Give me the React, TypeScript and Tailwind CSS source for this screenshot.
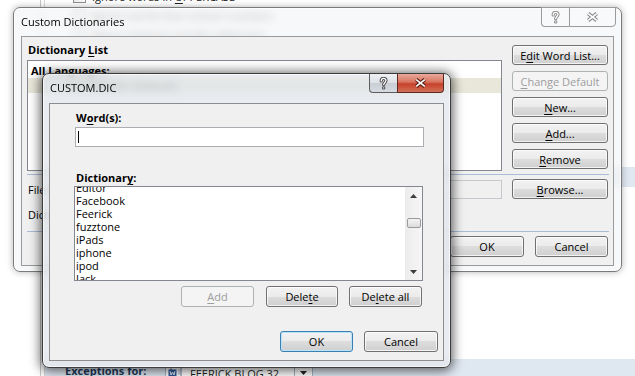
import React from "react";

type Kids = { children?: React.ReactNode };

function U({ children }: Kids) {
  return <span className="underline decoration-1 underline-offset-[2px]">{children}</span>;
}

type BtnProps = Kids & { className?: string; disabled?: boolean; primary?: boolean };

const btnFace =
  "bg-[linear-gradient(to_bottom,#f2f2f2_0%,#ebebeb_50%,#dddddd_50%,#cfcfcf_100%)]";

function Btn({ children, className = "", disabled, primary }: BtnProps) {
  let look = `border-[#707070] ${btnFace} shadow-[inset_0_0_0_1px_rgba(255,255,255,0.75)] text-black`;
  if (disabled) look = "border-[#adb2b5] bg-[#f4f4f4] text-[#9d9d9d]";
  if (primary) look = `border-[#3c7fb1] ${btnFace} shadow-[inset_0_0_0_1px_#b9e3f9] text-black`;
  return (
    <div
      className={`flex shrink-0 items-center justify-center rounded-[3px] border leading-[15px] ${look} ${className}`}
    >
      {children}
    </div>
  );
}

function HelpGlyph({ edge }: { edge: string }) {
  const d = "M2.2 4 C2.2 2.1 3.3 1.4 4.6 1.4 C6 1.4 7 2.3 7 3.6 C7 5.3 4.7 5.6 4.7 7.7";
  return (
    <svg width="9" height="13" viewBox="0 0 9 13">
      <path d={d} fill="none" stroke={edge} strokeWidth="3.2" strokeLinecap="round" />
      <circle cx="4.7" cy="10.9" r="1.7" fill={edge} />
      <path d={d} fill="none" stroke="#fff" strokeWidth="1.3" strokeLinecap="round" />
      <circle cx="4.7" cy="10.9" r="0.7" fill="#fff" />
    </svg>
  );
}

function CloseGlyph({ edge }: { edge: string }) {
  const d = "M2.2 1.6 L10.8 8.4 M10.8 1.6 L2.2 8.4";
  return (
    <svg width="13" height="10" viewBox="0 0 13 10">
      <path d={d} stroke={edge} strokeWidth="3.8" />
      <path d={d} stroke="#fff" strokeWidth="1.7" />
    </svg>
  );
}

function Checkbox() {
  return (
    <span className="h-[13px] w-[13px] shrink-0 border border-[#8e8f8f] bg-[linear-gradient(135deg,#dcdcdc,#ffffff)]" />
  );
}

const options = [
  <>
    Ignore words in <U>U</U>PPERCASE
  </>,
  <>Ignore words that contain numbers</>,
  <>Ignore Internet and file addresses</>,
  <>Flag repeated words</>,
  <>Enforce accented uppercase in French</>,
  <>Suggest from main dictionary only</>,
];

function BackgroundPage() {
  return (
    <div className="flex h-[376px]">
      <div className="w-[41px] shrink-0 border-r border-[#c8c8c8]" />
      <div className="w-[3px] shrink-0" />
      <div className="flex h-[376px] min-w-0 flex-1 flex-col border-l border-[#dadada]">
        <div className="-mt-[10px] flex h-[177px] shrink-0 flex-col gap-[6px] overflow-hidden pl-[28px]">
          {options.map((o, i) => (
            <div key={i} className="flex h-[13px] shrink-0 items-center gap-[6px] leading-[13px] text-[#222]">
              <Checkbox />
              <span>{o}</span>
            </div>
          ))}
        </div>
        <div className="flex h-[20px] shrink-0 items-center bg-[#dfe7f1] pl-[20px] font-bold text-[#1e395b]">
          When correcting spelling and grammar in Word
        </div>
        <div className="h-[172px] shrink-0" />
        <div className="flex h-[17px] shrink-0 items-start bg-[#dfe7f1] pl-[20px] pt-[4px]">
          <span className="w-[100px] font-bold leading-[15px] text-[#1e395b]">Exceptions for:</span>
          <div className="flex h-[20px] w-[148px] items-center border border-[#a7b5c6] bg-white">
            <svg width="14" height="13" viewBox="0 0 14 13" className="ml-[2px]">
              <rect x="3" y="0.5" width="10" height="12" fill="#fff" stroke="#6b7c93" />
              <rect x="0.5" y="2.5" width="8" height="7" fill="#2b5797" />
              <path d="M2 4 L3 8 L4.5 5 L6 8 L7 4" fill="none" stroke="#fff" strokeWidth="0.9" />
              <path d="M10 3 H12 M10 5 H12 M10 7 H12 M4 11 H12" stroke="#8aa0bd" strokeWidth="0.8" />
            </svg>
            <span className="ml-[8px] w-[104px] leading-[15px] text-[#222]">FEERICK BLOG 32</span>
            <div className="flex h-full flex-1 items-center justify-center border-l border-[#a7b5c6]">
              <svg width="7" height="4" viewBox="0 0 7 4">
                <path d="M0 0 H7 L3.5 4 Z" fill="#222" />
              </svg>
            </div>
          </div>
        </div>
      </div>
    </div>
  );
}

function OuterDialog() {
  return (
    <div className="absolute left-[13px] top-[7px] flex h-[265px] w-[609px] flex-col rounded-[7px] border border-[#7a7a7a] bg-[#f3f5f7]/70 px-[7px] pb-[5px] shadow-[inset_0_0_0_1px_rgba(255,255,255,0.7),0_0_7px_rgba(0,0,0,0.3)] backdrop-blur-[4px]">
      <div className="flex h-[28px] items-start">
        <span className="pt-[6px] leading-[15px] text-black">Custom Dictionaries</span>
        <div className="-mr-[2px] -mt-[1px] ml-auto flex h-[20px]">
          <div className="flex w-[28px] items-center justify-center rounded-bl-[4px] border border-r-0 border-[#9b9b9b] bg-white/20">
            <HelpGlyph edge="#8a8a8a" />
          </div>
          <div className="flex w-[47px] items-center justify-center rounded-br-[4px] border border-[#9b9b9b] bg-white/20">
            <CloseGlyph edge="#8a8a8a" />
          </div>
        </div>
      </div>

      <div className="flex h-[230px] flex-col border border-[#9a9a9a] bg-[#f0f0f0] pl-[5px]">
        <div className="flex gap-[10px]">
          <div className="flex w-[475px] flex-col">
            <div className="mt-[5px] pl-[1px] font-bold leading-[15px]">
              Dictionary <U>L</U>ist
            </div>
            <div className="mt-[3px] h-[111px] border border-[#828790] bg-white pt-[2px]">
              <div className="pl-[3px] font-bold leading-[15px]">All Languages:</div>
              <div className="flex h-[15px] items-center gap-[4px] bg-[#e9e7d9] pl-[18px]">
                <Checkbox />
                <span className="leading-[15px]">CUSTOM.DIC (Default)</span>
              </div>
            </div>
          </div>
          <div className="mt-[8px] flex w-[96px] flex-col gap-[6px]">
            <Btn className="h-[20px]">
              E<U>d</U>it Word List...
            </Btn>
            <Btn className="h-[20px]" disabled>
              <U>C</U>hange Default
            </Btn>
            <Btn className="h-[20px]">
              <U>N</U>ew...
            </Btn>
            <Btn className="h-[20px]">
              <U>A</U>dd...
            </Btn>
            <Btn className="h-[20px]">
              <U>R</U>emove
            </Btn>
          </div>
        </div>

        <div className="mt-[3px] h-px w-[582px] bg-[#a9bcd8]" />

        <div className="mt-[4px] flex gap-[10px]">
          <div className="flex h-[20px] w-[475px] items-center">
            <span className="w-[80px] pl-[1px] leading-[15px]">File location:</span>
            <div className="mt-[1px] h-[19px] flex-1 border border-[#c5c8cc] bg-[#f0f0f0]" />
          </div>
          <Btn className="h-[20px] w-[96px]">
            <U>B</U>rowse...
          </Btn>
        </div>

        <div className="mt-[8px] pl-[1px] leading-[15px]">Dictionary language:</div>

        <div className="mt-[9px] h-px w-[582px] bg-[#a9bcd8]" />

        <div className="mt-[4px] flex w-[581px] justify-end gap-[11px]">
          <Btn className="h-[21px] w-[74px]">OK</Btn>
          <Btn className="h-[21px] w-[73px]">Cancel</Btn>
        </div>
      </div>
    </div>
  );
}

const words = ["Editor", "Facebook", "Feerick", "fuzztone", "iPads", "iphone", "ipod", "Jack"];

function ScrollArrow({ up }: { up?: boolean }) {
  return (
    <div className="flex h-[17px] w-full items-center justify-center">
      <svg width="7" height="4" viewBox="0 0 7 4">
        <path d={up ? "M0 4 H7 L3.5 0 Z" : "M0 0 H7 L3.5 4 Z"} fill="#3d3d3d" />
      </svg>
    </div>
  );
}

function InnerDialog() {
  return (
    <div className="absolute left-[42px] top-[73px] flex h-[295px] w-[409px] flex-col rounded-[7px] border border-[#3c3c3c] bg-[#e2e6eb]/75 px-[6px] pb-[6px] shadow-[inset_0_0_0_1px_rgba(255,255,255,0.6),0_1px_11px_2px_rgba(0,0,0,0.6)] backdrop-blur-[4px]">
      <div className="flex h-[29px] items-start">
        <span className="pl-[1px] pt-[6px] leading-[15px] text-black">CUSTOM.DIC</span>
        <div className="ml-auto flex h-[19px]">
          <div className="flex w-[28px] items-center justify-center rounded-bl-[4px] border border-t-0 border-r-0 border-[#5d5d5d] bg-[linear-gradient(to_bottom,#eef0f3_0%,#dde1e6_50%,#c9ced5_51%,#d6dbe1_100%)]">
            <HelpGlyph edge="#474747" />
          </div>
          <div className="flex w-[47px] items-center justify-center rounded-br-[4px] border border-t-0 border-[#5a2a22] bg-[linear-gradient(to_bottom,#e9a99b_0%,#d8735f_45%,#c6412a_55%,#d2705a_100%)]">
            <CloseGlyph edge="#5b1d12" />
          </div>
        </div>
      </div>

      <div className="flex h-[258px] flex-col border border-[#8d8d8d] bg-[#f0f0f0] pr-[5px]">
        <div className="ml-[26px] mt-[6px] font-bold leading-[15px]">
          W<U>o</U>rd(s):
        </div>
        <div className="ml-[25px] mt-[2px] flex h-[20px] w-[349px] items-center border border-[#abadb3] bg-white pl-[2px]">
          <span className="h-[12px] w-px bg-black" />
        </div>

        <div className="ml-[26px] mt-[23px] font-bold leading-[15px]">
          Dictionar<U>y</U>:
        </div>
        <div className="ml-[24px] mt-[1px] flex h-[95px] w-[349px] border border-[#828790] bg-white">
          <div className="flex-1 overflow-hidden">
            <div className="-mt-[6px] pl-[1px]">
              {words.map((w) => (
                <div key={w} className="h-[13px] leading-[13px] text-black">
                  {w}
                </div>
              ))}
            </div>
          </div>
          <div className="flex w-[17px] flex-col items-center bg-[linear-gradient(to_right,#ececec,#f6f6f6)]">
            <ScrollArrow up />
            <div className="mt-[14px] h-[10px] w-[14px] rounded-[2px] border border-[#9a9a9a] bg-[linear-gradient(to_bottom,#f4f4f4,#dcdcdc)]" />
            <div className="flex-1" />
            <ScrollArrow />
          </div>
        </div>

        <div className="ml-[131px] mt-[5px] flex h-[21px]">
          <Btn className="w-[73px]" disabled>
            <U>A</U>dd
          </Btn>
          <Btn className="ml-[12px] w-[72px]">
            Dele<U>t</U>e
          </Btn>
          <Btn className="ml-[11px] w-[73px]">
            De<U>l</U>ete all
          </Btn>
        </div>

        <div className="mt-[24px] flex h-[21px] justify-end gap-[11px]">
          <Btn className="w-[73px]" primary>
            OK
          </Btn>
          <Btn className="w-[74px]">Cancel</Btn>
        </div>
      </div>
    </div>
  );
}

export default function App() {
  return (
    <div className="relative h-[376px] w-[635px] overflow-hidden bg-white font-['Open_Sans',sans-serif] text-[11px] text-black">
      <BackgroundPage />
      <OuterDialog />
      <InnerDialog />
    </div>
  );
}
